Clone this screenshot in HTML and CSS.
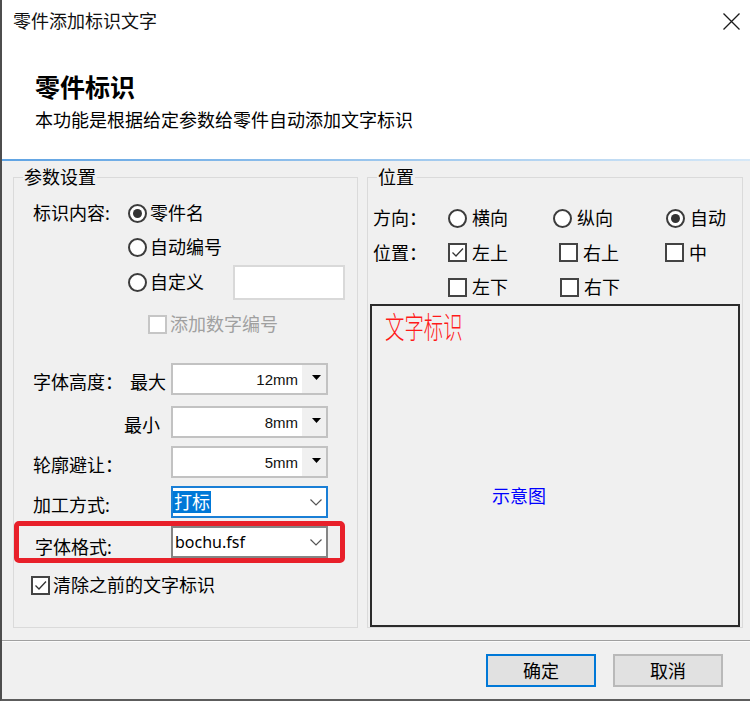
FILE: index.html
```html
<!DOCTYPE html>
<html lang="zh-CN">
<head>
<meta charset="utf-8">
<title>零件添加标识文字</title>
<link rel="stylesheet" href="styles.css">
</head>
<body>
<div class="window">
  <header class="header">
    <div class="titlebar">
      <span class="title">零件添加标识文字</span>
      <svg class="close" viewBox="0 0 17 17" width="17" height="17"><path d="M0.5 0.5L16.5 16.5M16.5 0.5L0.5 16.5" stroke="#1a1a1a" stroke-width="1.3" fill="none"/></svg>
    </div>
    <div class="heading">零件标识</div>
    <div class="subtitle">本功能是根据给定参数给零件自动添加文字标识</div>
  </header>
  <div class="accent"></div>
  <main class="main">
    <fieldset class="group left">
      <legend>参数设置</legend>
      <div class="content-block">
        <div class="clabel">标识内容:</div>
        <div class="options">
          <div class="opt h34"><span class="radio checked"></span>零件名</div>
          <div class="opt h34"><span class="radio"></span>自动编号</div>
          <div class="opt h36"><span class="radio"></span>自定义<span class="textbox"></span></div>
          <div class="opt h36 sub disabled"><span class="check"></span>添加数字编号</div>
        </div>
      </div>
      <div class="crow first">
        <div class="lbl"><span>字体高度：</span><span class="sublbl max">最大</span></div>
        <div class="combo spin"><span class="val">12mm</span><span class="arrow"><svg viewBox="0 0 9 5" width="9" height="5"><polygon points="0,0 9,0 4.5,5" fill="#000"/></svg></span></div>
      </div>
      <div class="crow second">
        <div class="lbl"><span></span><span class="sublbl min">最小</span></div>
        <div class="combo spin"><span class="val">8mm</span><span class="arrow"><svg viewBox="0 0 9 5" width="9" height="5"><polygon points="0,0 9,0 4.5,5" fill="#000"/></svg></span></div>
      </div>
      <div class="crow third">
        <div class="lbl"><span>轮廓避让：</span></div>
        <div class="combo spin"><span class="val">5mm</span><span class="arrow"><svg viewBox="0 0 9 5" width="9" height="5"><polygon points="0,0 9,0 4.5,5" fill="#000"/></svg></span></div>
      </div>
      <div class="crow fourth">
        <div class="lbl"><span>加工方式:</span></div>
        <div class="combo drop focus"><span class="val"><span class="sel">打标</span></span><svg class="chev" viewBox="0 0 12 7" width="12" height="7"><polyline points="0.5,0.5 6,6 11.5,0.5" fill="none" stroke="#555" stroke-width="1.2"/></svg></div>
      </div>
      <div class="highlight">
        <div class="lbl"><span>字体格式:</span></div>
        <div class="combo drop dark"><span class="val latin">bochu.fsf</span><svg class="chev" viewBox="0 0 12 7" width="12" height="7"><polyline points="0.5,0.5 6,6 11.5,0.5" fill="none" stroke="#555" stroke-width="1.2"/></svg></div>
      </div>
      <div class="opt clear"><span class="check"><svg viewBox="0 0 15 15" width="15" height="15"><polyline points="2.5,7.5 6,11 13,3.5" fill="none" stroke="#333" stroke-width="1.3"/></svg></span>清除之前的文字标识</div>
    </fieldset>
    <fieldset class="group right">
      <legend>位置</legend>
      <div class="prow r1">
        <span class="plabel">方向：</span>
        <span class="item w105"><span class="radio"></span>横向</span>
        <span class="item w113"><span class="radio"></span>纵向</span>
        <span class="item"><span class="radio checked"></span>自动</span>
      </div>
      <div class="prow r2">
        <span class="plabel">位置：</span>
        <span class="item w111"><span class="check"><svg viewBox="0 0 15 15" width="15" height="15"><polyline points="2.5,7.5 6,11 13,3.5" fill="none" stroke="#333" stroke-width="1.3"/></svg></span>左上</span>
        <span class="item w106"><span class="check"></span>右上</span>
        <span class="item"><span class="check"></span>中</span>
      </div>
      <div class="prow r3">
        <span class="plabel"></span>
        <span class="item w112"><span class="check"></span>左下</span>
        <span class="item"><span class="check"></span>右下</span>
      </div>
      <div class="preview">
        <div class="mark">文字标识</div>
        <div class="demo">示意图</div>
      </div>
    </fieldset>
  </main>
  <footer class="footer">
    <button class="btn default">确定</button>
    <button class="btn">取消</button>
  </footer>
</div>
</body>
</html>
```

FILE: styles.css
```css
* { box-sizing: border-box; }
html, body { margin: 0; padding: 0; }
body {
  width: 750px;
  height: 701px;
  overflow: hidden;
  background: #f0f0f0;
  font-family: "Noto Sans", "Noto Sans CJK SC", sans-serif;
  font-size: 18px;
  color: #000;
}
.window {
  width: 750px;
  height: 701px;
  border-left: 2px solid #4d4d4d;
  border-bottom: 2px solid #5c5c5c;
  display: flex;
  flex-direction: column;
  background: #f0f0f0;
}
.header { background: #fff; height: 159px; }
.titlebar {
  height: 42px;
  display: flex;
  align-items: center;
  justify-content: space-between;
  padding: 0 10px 0 11px;
}
.title { line-height: 42px; color: #111; }
.close { display: block; }
.heading { margin: 30px 0 0 33px; font-size: 25px; font-weight: 700; line-height: 31px; }
.subtitle { margin: 5px 0 0 33px; line-height: 24px; }
.accent { height: 2px; background: linear-gradient(90deg, #5fa3e3, #d6e8f7); }

.main { display: flex; gap: 9px; padding: 6px 7px 12px 11px; }
.group { margin: 0; padding: 0; border: 1px solid #dadada; min-width: 0; }
.group legend { line-height: 20px; padding: 0 1px; margin-left: 9px; }
.left { width: 345px; }
.right { width: 376px; }
.right legend { margin-left: 9px; }

.content-block { display: flex; padding: 9px 0 0 19px; }
.clabel { width: 95px; line-height: 34px; }
.options { display: flex; flex-direction: column; }
.opt { display: flex; align-items: center; line-height: 24px; white-space: nowrap; }
.h34 { height: 34px; }
.h36 { height: 36px; }
.options .sub { margin: 6px 0 0 20px; }
.disabled { color: #a0a0a0; }

.radio {
  width: 19px; height: 19px;
  border: 2px solid #3c3c3c;
  border-radius: 50%;
  background: #fff;
  margin-right: 3px;
  flex: none;
  display: flex; align-items: center; justify-content: center;
}
.radio.checked::after { content: ""; width: 9px; height: 9px; border-radius: 50%; background: #333; }
.check {
  width: 19px; height: 19px;
  border: 2px solid #444;
  background: #fff;
  margin-right: 3px;
  flex: none;
  display: flex;
}
.disabled .check { border-color: #c6c6c6; }
.textbox { width: 112px; height: 35px; border: 2px solid #d9d9d9; background: #fff; margin-left: 29px; }

.crow { display: flex; height: 32px; padding-left: 19px; }
.crow.first { margin-top: 21px; }
.crow.second { margin-top: 11px; }
.crow.third, .crow.fourth { margin-top: 8px; }
.lbl {
  width: 138px;
  display: flex;
  justify-content: space-between;
  align-items: center;
  padding-top: 6px;
  line-height: 24px;
  white-space: nowrap;
}
.sublbl.max { padding-right: 5px; }
.sublbl.min { padding-right: 11px; }
.combo {
  width: 157px; height: 32px;
  display: flex; align-items: center;
  background: #fff;
  border: 2px solid #c2c2c2;
  flex: none;
}
.spin .val {
  flex: 1;
  text-align: right;
  padding-right: 4px;
  font-family: "Liberation Sans", sans-serif;
  font-size: 15px;
  color: #111;
}
.spin .arrow {
  width: 24px;
  align-self: stretch;
  background: #f0f0f0;
  display: flex; align-items: center; justify-content: center;
  padding: 0 0 3px 4px;
}
.drop .val { flex: 1; padding-left: 0; line-height: 24px; }
.chev { margin-right: 4px; }
.focus { border-color: #1a7fd6; }
.sel { background: #0078d7; color: #fff; line-height: 22px; display: inline-block; padding: 0 1px; }
.dark { border-color: #858585; }
.latin { font-family: "Noto Sans", sans-serif; font-size: 16px; padding-left: 2px !important; }

.highlight {
  margin-top: 3px;
  width: 331px; height: 42px;
  border: 5px solid #e8202a;
  border-radius: 5px;
  display: flex;
  padding-left: 16px;
}
.highlight .lbl { width: 136px; padding-top: 10px; }
.clear { margin: 7px 0 0 17px; height: 30px; }

.prow { display: flex; align-items: center; padding-left: 5px; line-height: 24px; }
.prow.r1 { margin-top: 14px; height: 34px; }
.prow.r2 { height: 35px; }
.prow.r3 { height: 34px; }
.plabel { width: 75px; flex: none; }
.item { display: flex; align-items: center; white-space: nowrap; flex: none; }
.right .radio, .right .check { margin-right: 5px; }
.w105 { width: 105px; }
.w113 { width: 113px; }
.w111 { width: 111px; }
.w106 { width: 106px; }
.w112 { width: 112px; }

.preview {
  margin: 0 2px;
  height: 323px;
  border: 2px solid #2b2b2b;
  padding: 2px 0 0 13px;
}
.mark {
  width: max-content;
  font-family: "Noto Sans CJK SC", sans-serif;
  font-size: 20px;
  font-weight: 200;
  line-height: 24px;
  color: #ff1a1a;
  transform: scale(0.97, 1.5);
  transform-origin: 0 0;
}
.demo { margin: 152px 0 0 107px; color: #0000ff; line-height: 24px; }

.footer {
  height: 59px;
  border-top: 1px solid #a0a0a0;
  box-shadow: inset 0 1px 0 #fbfbfb;
  display: flex;
  justify-content: flex-end;
  gap: 17px;
  padding: 13px 27px 0 0;
}
.btn {
  width: 110px; height: 33px;
  background: #e1e1e1;
  border: 2px solid #b9b9b9;
  display: flex; align-items: center; justify-content: center;
  font: inherit;
  line-height: 24px;
  color: #000;
  padding: 0;
}
.btn.default { border-color: #0078d7; }
```
